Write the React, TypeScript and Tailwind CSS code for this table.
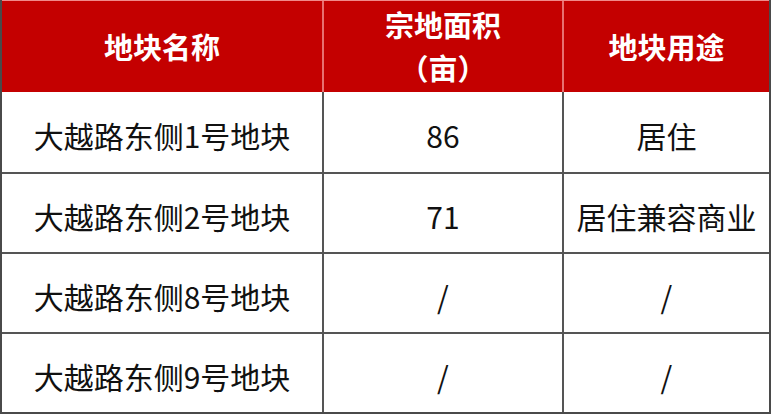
const rows = [
  { name: '大越路东侧1号地块', area: '86', use: '居住' },
  { name: '大越路东侧2号地块', area: '71', use: '居住兼容商业' },
  { name: '大越路东侧8号地块', area: '/', use: '/' },
  { name: '大越路东侧9号地块', area: '/', use: '/' },
];

export default function App() {
  return (
    <div
      className="w-[772px] h-[414px] bg-white overflow-hidden"
      style={{ fontFamily: '"Noto Sans CJK SC", "Noto Sans", sans-serif' }}
    >
      <div className="w-[771px] border-l-2 border-b-2 border-r-2 border-[#4a4a4a]">
        {/* header */}
        <div className="grid grid-cols-[322px_240px_1fr] h-[92px] bg-[#c40000] border-t border-[#f08a8a] text-white font-bold text-[29px]">
          <div className="flex items-center justify-center border-r-2 border-[#e87070]">地块名称</div>
          <div className="flex flex-col items-center justify-center leading-[43px] border-r-2 border-[#e87070] pb-[2px]">
            <span>宗地面积</span>
            <span>（亩）</span>
          </div>
          <div className="flex items-center justify-center">地块用途</div>
        </div>

        {rows.map((r, i) => (
          <div
            key={r.name}
            className={
              'grid grid-cols-[322px_240px_1fr] h-[80px] text-[30px] text-[#111] ' +
              (i === 0 ? '' : 'border-t-2 border-[#555]')
            }
          >
            <div className="flex items-center justify-center border-r-2 border-[#555] pt-[6px]">{r.name}</div>
            <div className="flex items-center justify-center border-r-2 border-[#555] pt-[6px]">{r.area}</div>
            <div className="flex items-center justify-center pt-[6px]">{r.use}</div>
          </div>
        ))}
      </div>
    </div>
  );
}
